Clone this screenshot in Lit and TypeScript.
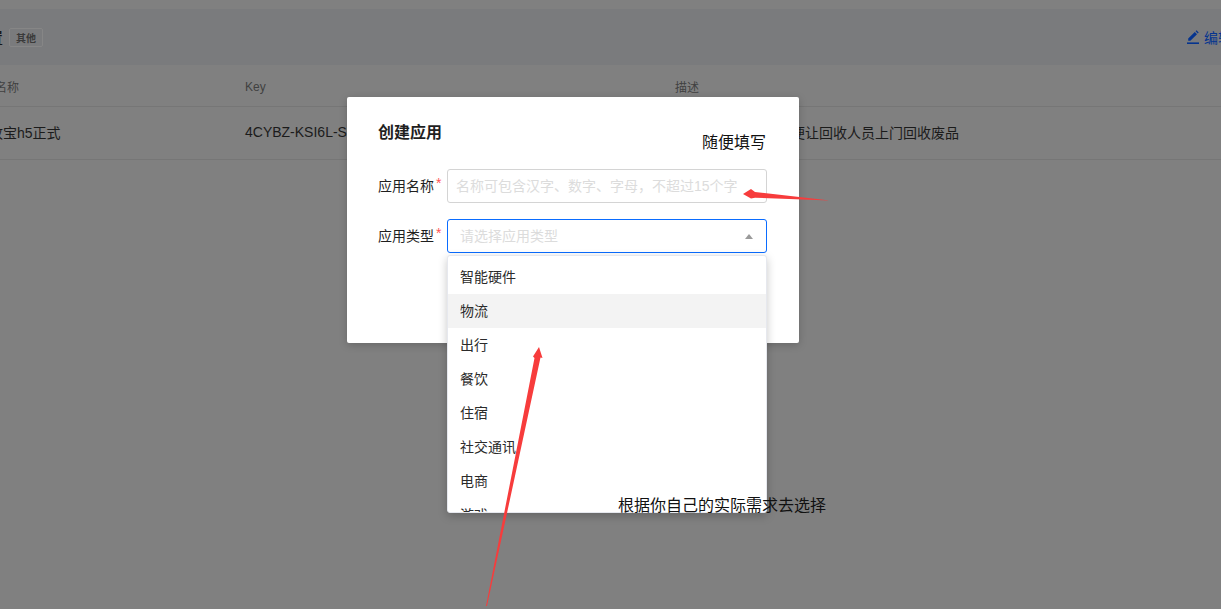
import { LitElement, html, css } from "lit";
import { customElement } from "lit/decorators.js";

const OPTIONS = ["智能硬件", "物流", "出行", "餐饮", "住宿", "社交通讯", "电商", "游戏"];

@customElement("app-root")
export class AppRoot extends LitElement {
  static styles = css`
    :host {
      display: block;
      position: relative;
      width: 1221px;
      height: 609px;
      overflow: hidden;
      background: #808080;
      font-family: "Liberation Sans", "Noto Sans CJK SC", sans-serif;
      color: #1a1a1a;
    }
    .page { display: flex; flex-direction: column; padding-top: 9px; width: 1280px; margin-left: -5px; }
    .head {
      height: 56px; box-sizing: border-box; background: #7a7b7d;
      display: flex; align-items: center; justify-content: space-between; padding-right: 40px;
    }
    .title { display: flex; align-items: center; gap: 6px; font-size: 16px; font-weight: 500; color: #161616; margin-left: -24px; }
    .tag {
      width: 34px; height: 19px; box-sizing: border-box; border: 1px solid #868686; border-radius: 2px;
      font-size: 10px; color: #3a3a3a; display: flex; align-items: center; justify-content: center; font-weight: 700;
    }
    .edit { display: flex; align-items: center; gap: 4px; font-size: 14px; color: #05348f; width: 49px; white-space: nowrap; }
    .edit svg { flex: none; }
    .row { display: grid; grid-template-columns: 250px 430px 1fr; border-bottom: 1px solid #767676; }
    .thead { height: 42px; padding-top: 2px; font-size: 12px; color: #414141; align-items: center; box-sizing: border-box; }
    .tbody { height: 53px; padding-bottom: 2px; font-size: 14px; color: #1b1b1b; align-items: center; box-sizing: border-box; }
    .row > span { white-space: nowrap; }
    .first { margin-left: -20px; }
    .cell-desc { margin-left: 116px; }

    .scrim { position: absolute; inset: 0; padding: 97px 0 0 347px; }
    .modal {
      position: relative; width: 452px; height: 246px; box-sizing: border-box; background: #fff; border-radius: 2px;
      padding: 26px 32px 0 31px; box-shadow: 0 2px 8px rgba(0, 0, 0, 0.2); display: flex; flex-direction: column;
    }
    h2 { margin: 0 0 26px; font-size: 16px; line-height: 20px; font-weight: 700; color: #1f1f1f; }
    .field { display: flex; align-items: center; height: 34px; margin-bottom: 16px; }
    label { width: 69px; flex: none; font-size: 14px; color: #1f1f1f; position: relative; white-space: nowrap; padding-bottom: 2px; }
    label i { position: absolute; left: 58px; top: 0; color: #f55; font-style: normal; font-size: 14px; }
    .input {
      flex: 1; height: 34px; box-sizing: border-box; border: 1px solid #d4d4d4; border-radius: 3px;
      padding: 0 0 2px 8px; font-size: 14px; color: #dcdcdc; display: flex; align-items: center; white-space: nowrap;
    }
    .select { position: relative; border-color: #0a6cff; padding: 0 13px 2px 12px; justify-content: space-between; }
    .caret { width: 0; height: 0; border: 4px solid transparent; border-top: 0; border-bottom: 5px solid #9a9a9a; margin-top: 2px; }
    .menu {
      position: absolute; left: -1px; right: -1px; top: 35px; height: 258px; box-sizing: border-box;
      background: #fff; border: 1px solid #e6e8ee; border-radius: 3px; padding-top: 4px; overflow: hidden;
      box-shadow: 0 3px 10px rgba(0, 0, 0, 0.22); z-index: 2;
    }
    .opt { height: 34px; line-height: 34px; padding-left: 12px; font-size: 14px; color: #2b2b2b; }
    .opt.on { background: #f3f3f3; }

    .note { position: absolute; font-size: 16px; line-height: 22px; color: #111; white-space: nowrap; z-index: 3; }
    .n1 { left: 702px; top: 132px; }
    .n2 { left: 618px; top: 495px; }
    .marks { position: absolute; inset: 0; z-index: 4; pointer-events: none; }
  `;

  render() {
    return html`
      <div class="page">
        <div class="head">
          <div class="title"><span>配置</span><span class="tag">其他</span></div>
          <div class="edit">
            <svg width="14" height="14" viewBox="0 0 14 14"><path d="M1 13.2h12" stroke="currentColor" stroke-width="1.6"/><path d="M2.2 10.8V8.6L8.8 2l2.2 2.2-6.6 6.6zM9.6 1.2l.9-.9 2.2 2.2-.9.9z" fill="currentColor"/></svg>
            <span>编辑</span>
          </div>
        </div>
        <div class="row thead"><span>名称</span><span>Key</span><span>描述</span></div>
        <div class="row tbody">
          <span class="first">回收宝h5正式</span>
          <span>4CYBZ-KSI6L-S5XXX-XXXXX</span>
          <span class="cell-desc">便让回收人员上门回收废品</span>
        </div>
      </div>

      <div class="scrim">
        <div class="modal">
          <h2>创建应用</h2>
          <div class="field">
            <label>应用名称<i>*</i></label>
            <div class="input">名称可包含汉字、数字、字母，不超过15个字</div>
          </div>
          <div class="field">
            <label>应用类型<i>*</i></label>
            <div class="input select">
              <span>请选择应用类型</span><span class="caret"></span>
              <div class="menu">
                ${OPTIONS.map((o) => html`<div class="opt ${o === "物流" ? "on" : ""}">${o}</div>`)}
              </div>
            </div>
          </div>
        </div>
      </div>

      <div class="note n1">随便填写</div>
      <div class="note n2">根据你自己的实际需求去选择</div>
      <svg class="marks" width="1221" height="609" viewBox="0 0 1221 609">
        <path d="M830 200.5 L755 192 L751 189 L743 194 L751 198.5 L755 197.7 Z" fill="#f73c3c"/>
        <path d="M486 606 L534.5 358 L533 356.5 L539 347 L542.5 358 L540.5 357.5 L487 606 Z" fill="#f73c3c"/>
      </svg>
    `;
  }
}
